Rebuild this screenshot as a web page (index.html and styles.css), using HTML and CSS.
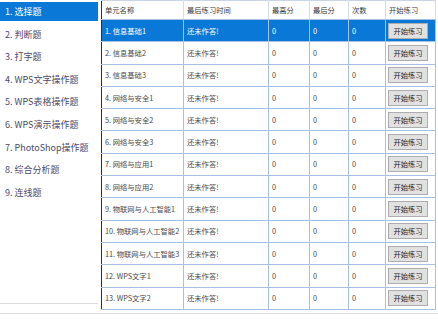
FILE: index.html
```html
<!DOCTYPE html>
<html lang="zh">
<head>
<meta charset="utf-8">
<link rel="stylesheet" href="styles.css">
</head>
<body>
<div class="app">
  <div class="main">
    <nav class="sidebar">
      <div class="item active">1. 选择题</div>
      <div class="item">2. 判断题</div>
      <div class="item">3. 打字题</div>
      <div class="item">4. WPS文字操作题</div>
      <div class="item">5. WPS表格操作题</div>
      <div class="item">6. WPS演示操作题</div>
      <div class="item">7. PhotoShop操作题</div>
      <div class="item">8. 综合分析题</div>
      <div class="item">9. 连线题</div>
    </nav>
    <div class="table-wrap">
      <table class="grid">
        <colgroup>
          <col class="c1"><col class="c2"><col class="c3"><col class="c4"><col class="c5"><col class="c6">
        </colgroup>
        <thead>
          <tr><th>单元名称</th><th>最后练习时间</th><th>最高分</th><th>最后分</th><th>次数</th><th>开始练习</th></tr>
        </thead>
        <tbody>
          <tr class="selected"><td>1. 信息基础1</td><td>还未作答!</td><td>0</td><td>0</td><td>0</td><td class="bc"><button class="btn">开始练习</button></td></tr>
          <tr><td>2. 信息基础2</td><td>还未作答!</td><td>0</td><td>0</td><td>0</td><td class="bc"><button class="btn">开始练习</button></td></tr>
          <tr><td>3. 信息基础3</td><td>还未作答!</td><td>0</td><td>0</td><td>0</td><td class="bc"><button class="btn">开始练习</button></td></tr>
          <tr><td>4. 网络与安全1</td><td>还未作答!</td><td>0</td><td>0</td><td>0</td><td class="bc"><button class="btn">开始练习</button></td></tr>
          <tr><td>5. 网络与安全2</td><td>还未作答!</td><td>0</td><td>0</td><td>0</td><td class="bc"><button class="btn">开始练习</button></td></tr>
          <tr><td>6. 网络与安全3</td><td>还未作答!</td><td>0</td><td>0</td><td>0</td><td class="bc"><button class="btn">开始练习</button></td></tr>
          <tr><td>7. 网络与应用1</td><td>还未作答!</td><td>0</td><td>0</td><td>0</td><td class="bc"><button class="btn">开始练习</button></td></tr>
          <tr><td>8. 网络与应用2</td><td>还未作答!</td><td>0</td><td>0</td><td>0</td><td class="bc"><button class="btn">开始练习</button></td></tr>
          <tr><td>9. 物联网与人工智能1</td><td>还未作答!</td><td>0</td><td>0</td><td>0</td><td class="bc"><button class="btn">开始练习</button></td></tr>
          <tr><td>10. 物联网与人工智能2</td><td>还未作答!</td><td>0</td><td>0</td><td>0</td><td class="bc"><button class="btn">开始练习</button></td></tr>
          <tr><td>11. 物联网与人工智能3</td><td>还未作答!</td><td>0</td><td>0</td><td>0</td><td class="bc"><button class="btn">开始练习</button></td></tr>
          <tr><td>12. WPS文字1</td><td>还未作答!</td><td>0</td><td>0</td><td>0</td><td class="bc"><button class="btn">开始练习</button></td></tr>
          <tr><td>13. WPS文字2</td><td>还未作答!</td><td>0</td><td>0</td><td>0</td><td class="bc"><button class="btn">开始练习</button></td></tr>
        </tbody>
      </table>
    </div>
  </div>
  <div class="footer"></div>
</div>
</body>
</html>
```
FILE: styles.css
```css
html, body {
  margin: 0;
  padding: 0;
  background: #ffffff;
  font-family: "Noto Sans CJK SC", "Microsoft YaHei", "Noto Sans", sans-serif;
}

.app {
  width: 438px;
  height: 319px;
  display: flex;
  flex-direction: column;
}

.main {
  display: flex;
  height: 313px;
}

.sidebar {
  width: 98px;
  flex: none;
  height: 304px;
  box-sizing: border-box;
  padding-top: 2px;
  border-bottom: 1px solid #dcdcdc;
}

.item {
  height: 19px;
  line-height: 19px;
  margin-bottom: 3.6px;
  padding-left: 5px;
  font-size: 9px;
  color: #4a4a6c;
  white-space: nowrap;
}

.item.active {
  background: #0a78d7;
  color: #ffffff;
}

.table-wrap {
  margin-left: 3px;
}

.grid {
  border-collapse: collapse;
  table-layout: fixed;
  width: 334px;
  font-size: 7.3px;
  color: #4a4a4a;
  border-left: 1px solid #2e2e3e;
  border-bottom: 1px solid #2e2e3e;
  border-top: 1px solid #c9d5e6;
  border-right: 1px solid #c9d5e6;
}

.c1 { width: 82px; }
.c2 { width: 85px; }
.c3 { width: 41px; }
.c4 { width: 39px; }
.c5 { width: 37px; }
.c6 { width: 50px; }

.grid th {
  height: 18px;
  padding: 0 0 0 3px;
  font-weight: normal;
  text-align: left;
  white-space: nowrap;
  color: #3a3a3a;
  border-right: 1px solid #d3dceb;
  border-bottom: 1px solid #a7c1e6;
}

.grid td {
  height: 21.3px;
  padding: 0 0 0 3px;
  white-space: nowrap;
  overflow: hidden;
  border-right: 1px solid #a7c1e6;
  border-bottom: 1px solid #a7c1e6;
}

.grid td.bc {
  padding-left: 2px;
}

.grid tr.selected td {
  background: #0a78d7;
  color: #ffffff;
}

.btn {
  width: 40px;
  height: 16px;
  padding: 0;
  margin: 0;
  display: block;
  font-family: inherit;
  font-size: 7.3px;
  color: #222222;
  background: #e1e1e1;
  border: 1px solid #adadad;
  border-radius: 0;
}

.footer {
  flex: 1;
  border-top: 1px solid #dcdcdc;
}
```
